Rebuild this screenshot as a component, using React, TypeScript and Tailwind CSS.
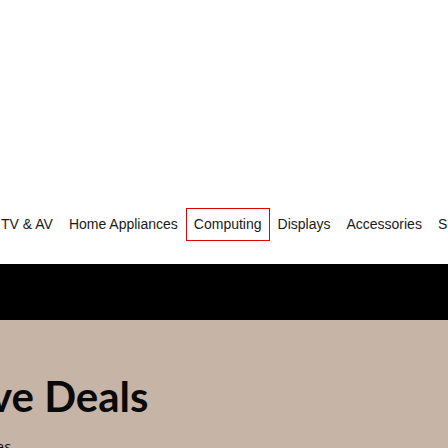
import React from "react";

const items = ["TV & AV", "Home Appliances", "Computing", "Displays", "Accessories", "SmartThings"];

export default function App() {
  return (
    <div className="w-[448px] h-[448px] overflow-hidden bg-white">
      <div className="h-[208px]" />
      <nav
        className="flex h-[33px] -ml-[7px] whitespace-nowrap text-[14px] text-[#1a1a1a]"
        style={{ fontFamily: '"Liberation Sans", Arial, sans-serif' }}
      >
        {items.map((it) => (
          <div
            key={it}
            className={
              it === "Computing"
                ? "flex shrink-0 items-center border border-[#e30000] px-[7px]"
                : "flex shrink-0 items-center border border-transparent px-[7px]"
            }
          >
            {it}
          </div>
        ))}
      </nav>
      <div className="h-[23px]" />
      <div className="h-[56px] bg-black" />
      <div className="h-[200px] bg-[#c6b4a7] pt-[55px]">
        <div
          className="-ml-[10px] whitespace-nowrap text-[42px] font-bold leading-none text-[#0a0a0a]"
          style={{ fontFamily: "Lato, sans-serif" }}
        >
          ve Deals
        </div>
        <div
          className="mt-[22px] -ml-[4px] text-[15px] leading-none text-[#111]"
          style={{ fontFamily: '"Open Sans", sans-serif' }}
        >
          as
        </div>
      </div>
    </div>
  );
}
